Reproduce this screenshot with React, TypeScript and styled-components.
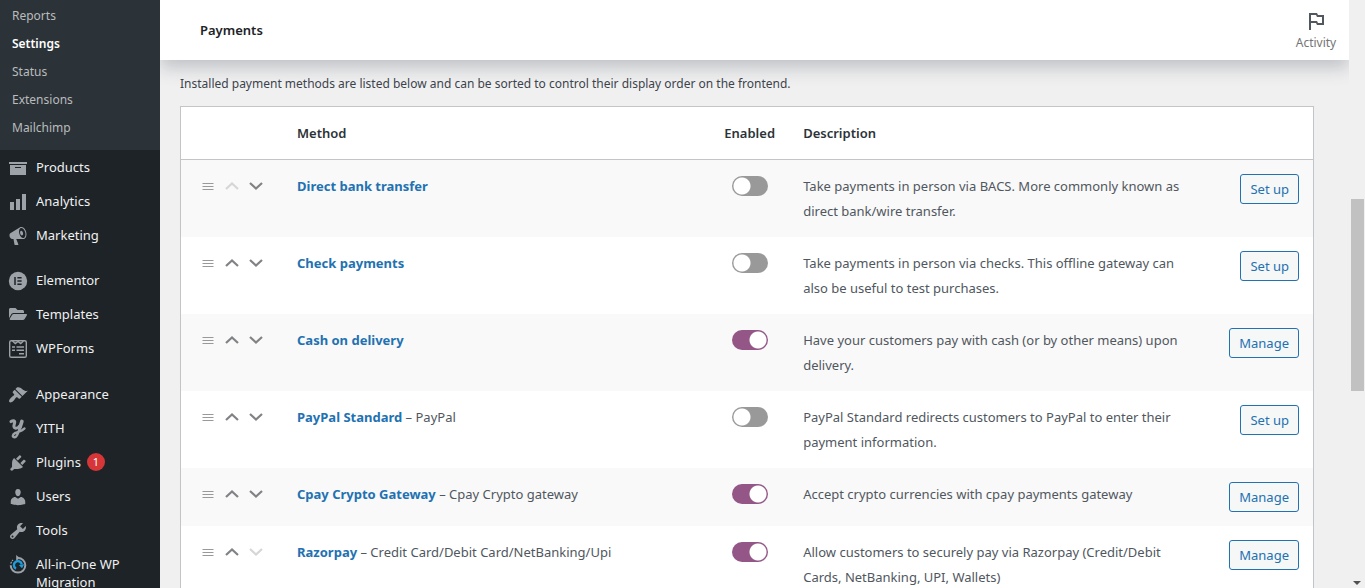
import React from "react";
import styled, { createGlobalStyle, css } from "styled-components";
import { FaFolderOpen } from "react-icons/fa";
import { MdOutlinedFlag } from "react-icons/md";

const GlobalStyle = createGlobalStyle`
  *, *::before, *::after { box-sizing: border-box; }
  body {
    margin: 0;
    background: #f0f0f1;
    color: #3c434a;
    font-family: "Noto Sans", "Open Sans", sans-serif;
    font-size: 12px;
    line-height: 18px;
  }
  a { text-decoration: none; }
`;

const Shell = styled.div`
  display: flex;
  height: 100vh;
  overflow: hidden;
`;

const Sidebar = styled.nav`
  flex: 0 0 160px;
  background: #1d2327;
  overflow: hidden;
`;

const SubMenu = styled.ul`
  list-style: none;
  margin: 0;
  padding: 2px 0 8px;
  background: #2c3338;
`;

const SubLink = styled.a<{ $current?: boolean }>`
  display: block;
  padding: 5px 12px;
  color: ${(p) => (p.$current ? "#fff" : "#b9bbbd")};
  font-weight: ${(p) => (p.$current ? 600 : 400)};
`;

const MenuGroup = styled.ul`
  list-style: none;
  margin: 0;
  padding: 0 0 11px;
  & + & { padding-bottom: 12px; }
`;

const MenuLink = styled.a`
  display: flex;
  align-items: flex-start;
  padding: 8px 12px 8px 8px;
  gap: 8px;
  color: #f0f0f1;
  font-size: 13px;
`;

const MenuIcon = styled.span`
  display: grid;
  place-items: center;
  flex: 0 0 20px;
  height: 18px;
  color: #9ca2a7;
  svg { display: block; overflow: visible; }
`;

const Badge = styled.span`
  display: inline-block;
  min-width: 18px;
  height: 18px;
  margin-left: 6px;
  border-radius: 9px;
  background: #d63638;
  color: #fff;
  font-size: 11px;
  text-align: center;
  vertical-align: top;
`;

const Main = styled.main`
  flex: 1;
  min-width: 0;
  overflow: hidden;
`;

const TopBar = styled.header`
  display: flex;
  align-items: center;
  justify-content: space-between;
  height: 60px;
  padding: 0 0 0 40px;
  background: #fff;
  box-shadow: 0 8px 16px rgba(85, 93, 102, 0.3);
`;

const Title = styled.h1`
  margin: 0;
  color: #1d2327;
  font-size: 13px;
  font-weight: 600;
`;

const ActivityButton = styled.button`
  display: flex;
  flex-direction: column;
  align-items: center;
  width: 66px;
  gap: 1px;
  padding: 0;
  border: 0;
  background: none;
  color: #757575;
  font: inherit;
  svg { color: #50575e; }
`;

const Content = styled.section`
  padding: 15px 35px 0 20px;
`;

const Intro = styled.p`
  margin: 0 0 13px;
`;

const Table = styled.table`
  width: 100%;
  table-layout: fixed;
  border: 1px solid #c3c4c7;
  border-spacing: 0;
  background: #fff;
  font-size: 13px;
  line-height: 25px;
`;

const Col = styled.col<{ $width?: string }>`
  width: ${(p) => p.$width ?? "auto"};
`;

const cell = css<{ $align?: "center" | "right" }>`
  padding: 14px 14px 13px;
  text-align: ${(p) => p.$align ?? "left"};
  vertical-align: top;
`;

const HeadCell = styled.th<{ $align?: "center" | "right" }>`
  ${cell}
  padding-left: ${(p) => (p.$align ? "0" : "14px")};
  padding-right: 0;
  border-bottom: 1px solid #c3c4c7;
  color: #2c3338;
  font-weight: 600;
`;

const Cell = styled.td<{ $align?: "center" | "right" }>`
  ${cell}
  color: #50575e;
`;

const Row = styled.tr`
  &:nth-child(odd) { background: #f9f9f9; }
`;

const SortCell = styled(Cell)`
  padding-left: 15px;
  padding-right: 0;
`;

const SortTools = styled.div`
  display: flex;
  height: 24px;
  align-items: center;
`;

const SortButton = styled.button`
  display: grid;
  place-items: center;
  width: 24px;
  height: 24px;
  padding: 0;
  border: 0;
  background: none;
  color: #808285;
  &:disabled { color: #d5d6d7; }
`;

const MethodLink = styled.a`
  color: #2271b1;
  font-weight: 700;
`;

const Toggle = styled.input`
  appearance: none;
  display: block;
  width: 36px;
  height: 20px;
  margin: 2px auto 0;
  border-radius: 10px;
  background: radial-gradient(circle at 10px 10px, #fff 8px, transparent 9px) #999;
  &:checked {
    background: radial-gradient(circle at 26px 10px, #fff 8px, transparent 9px) #935687;
  }
`;

const ActionCell = styled(Cell)`
  padding-bottom: 14px;
`;

const ActionButton = styled.button`
  display: block;
  height: 30px;
  margin-left: auto;
  padding: 0 9px;
  border: 1px solid #2271b1;
  border-radius: 3px;
  background: #f6f7f7;
  color: #2271b1;
  font: inherit;
  font-size: 13px;
  line-height: 28px;
`;

const ScrollTrack = styled.div`
  display: flex;
  flex-direction: column;
  flex: 0 0 16px;
  align-items: center;
  background: #f0f0f0;
`;

const ScrollThumb = styled.div`
  width: 13px;
  height: 192px;
  margin-top: 199px;
  background: #c1c1c1;
`;

const ScrollArrow = styled.div`
  margin: auto 0 3px;
  border: 4px solid transparent;
  border-top-color: #505050;
  border-bottom: 0;
`;

const Glyph = ({ d, size = 20 }: { d: string; size?: number }) => (
  <svg width={size} height={size} viewBox="0 0 20 20" fill="currentColor" aria-hidden="true">
    <path d={d} />
  </svg>
);

const ElementorIcon = () => (
  <svg width="20" height="20" viewBox="0 0 20 20" aria-hidden="true">
    <circle cx="10" cy="10" r="9.2" fill="currentColor" />
    <path d="M7 6v8M9.4 6.8h4.2M9.4 10h4.2M9.4 13.2h4.2" stroke="#1d2327" strokeWidth="1.5" />
  </svg>
);

const FormsIcon = () => (
  <svg width="20" height="20" viewBox="0 0 20 20" fill="none" stroke="currentColor" aria-hidden="true">
    <rect x="1.7" y="1.7" width="16.6" height="16.6" rx="1.6" strokeWidth="1.4" />
    <path d="M4.5 2l2.8 2.6L10 2.4l2.7 2.2L15.500 2" strokeWidth="1.3" />
    <path d="M4 8h3M8.500 8H16M4 11.200h3M8.500 11.200H16M11 14.800h5" strokeWidth="1.5" />
  </svg>
);

const YithIcon = () => (
  <svg width="20" height="20" viewBox="0 0 20 20" fill="none" stroke="currentColor" strokeLinecap="round" strokeLinejoin="round" aria-hidden="true">
    <path d="M3 2.600C4.500 1.600 7 1.200 6.700 3.400L5.900 6.800C5.500 9.900 9.400 10 11.500 7" strokeWidth="3" />
    <path d="M13.900 2.400L11.600 9.500C10.600 13 9.200 18.300 6.700 18.300C4.300 18.300 4.200 15.700 7 14.200C10 12.600 14 12.300 16.400 9.500" strokeWidth="2.500" />
    <path d="M13.900 2.400L12 8.500" strokeWidth="3.600" />
  </svg>
);

const MigrationIcon = () => (
  <svg width="20" height="20" viewBox="0 0 20 20" fill="none" aria-hidden="true">
    <path d="M10 3A7.300 7.300 0 1 1 2.700 10.300" stroke="currentColor" strokeWidth="2" />
    <path d="M2.800 8.700A7.300 7.300 0 0 1 5 5" stroke="currentColor" strokeWidth="1.200" strokeDasharray="2 1" />
    <path d="M8.200 0L11.800 3L8.200 6Z" fill="currentColor" />
    <path d="M8 13.700A4 4 0 1 1 13.800 9.500" stroke="#1e9ddb" strokeWidth="2.400" />
    <path d="M16.200 9.200L14 13.200L10.800 9.900Z" fill="#1e9ddb" />
  </svg>
);

const paths = {
  archive: "M19 4v2H1V4h18zM2 7h16v10H2V7zm11 3V9H7v1h6z",
  chart: "M18 18V2h-4v16h4zm-6 0V7H8v11h4zm-6 0v-8H2v8h4z",
  megaphone:
    "M18.15 5.94c.46 1.62.38 3.22-.02 4.48-.42 1.28-1.26 2.18-2.3 2.48-.16.06-.26.06-.4.06-.06.02-.12.02-.18.02-.06.02-.14.02-.22.02h-6.8l2.22 5.5c.02.14-.06.26-.14.34-.08.1-.24.16-.34.16H6.95c-.1 0-.26-.06-.34-.16-.08-.08-.16-.2-.14-.34l-1-5.5H4.25l-.02-.02c-.5.06-1.08-.18-1.54-.62s-.88-1.08-1.06-1.88c-.24-.8-.2-1.56-.02-2.2.18-.62.58-1.08 1.06-1.3l.02-.02 9-5.4c.1-.06.18-.1.24-.16.06-.04.14-.08.24-.12.16-.08.28-.12.5-.18 1.04-.3 2.24.1 3.22.98s1.84 2.24 2.26 3.86zm-2.58 5.98h-.02c.4-.1.74-.34 1.04-.7.58-.7.86-1.76.86-3.04 0-.64-.1-1.3-.28-1.98-.34-1.36-1.02-2.5-1.78-3.24s-1.68-1.1-2.46-.88c-.82.22-1.4.96-1.7 2-.32 1.04-.28 2.36.06 3.72.38 1.36 1 2.5 1.8 3.24.78.74 1.62 1.1 2.48.88zm-2.54-7.08c.22-.04.42-.02.62.04.38.16.76.48 1.02 1s.42 1.2.42 1.78c0 .3-.04.56-.12.8-.18.48-.44.84-.86.94-.34.1-.8-.06-1.14-.4s-.64-.86-.78-1.5c-.18-.62-.12-1.24.02-1.72s.48-.84.82-.94z",
  brush:
    "M14.48 11.06L7.41 3.99l1.5-1.5c.5-.56 2.3-.47 3.51.32 1.21.8 1.43 1.28 2.91 2.1 1.18.64 2.45 1.26 4.45.85zm-.71.71L6.7 4.7 4.93 6.47c-.39.39-.39 1.02 0 1.41l1.06 1.06c.39.39.39 1.03 0 1.42-.6.6-1.43 1.11-2.21 1.69-.35.26-.7.53-1.01.84C1.43 14.23.4 16.08 1.4 17.07c.99 1 2.84-.03 4.18-1.36.31-.31.58-.66.85-1.02.57-.78 1.08-1.61 1.69-2.21.39-.39 1.02-.39 1.41 0l1.06 1.06c.39.39 1.02.39 1.41 0z",
  plug:
    "M13.11 4.36L9.87 7.6 8 5.73l3.24-3.24c.35-.34 1.05-.2 1.56.32.52.51.66 1.21.31 1.55zm-8 1.77l.91-1.12 9.01 9.01-1.19.84c-.71.71-2.63 1.16-3.82 1.16H6.14L4.9 17.26c-.59.59-1.54.59-2.12 0-.59-.58-.59-1.53 0-2.12l1.24-1.24v-3.88c0-1.13.4-3.19 1.09-3.89zm7.26 3.97l3.24-3.24c.34-.35 1.04-.21 1.55.31.52.51.66 1.21.31 1.55l-3.24 3.25z",
  user:
    "M10 9.25c-2.27 0-2.73-3.44-2.73-3.44C7 4.02 7.82 2 9.97 2c2.16 0 2.98 2.02 2.71 3.81 0 0-.41 3.44-2.68 3.44zm0 2.57L12.72 10c2.39 0 4.52 2.33 4.52 4.53v2.49s-3.65 1.13-7.24 1.13c-3.65 0-7.24-1.13-7.24-1.13v-2.49c0-2.25 1.94-4.48 4.47-4.48z",
  wrench:
    "M16.68 9.77c-1.34 1.34-3.3 1.67-4.95.99l-5.41 6.52c-.99.99-2.59.99-3.58 0s-.99-2.59 0-3.57l6.52-5.42c-.68-1.65-.35-3.61.99-4.95 1.28-1.28 3.12-1.62 4.72-1.06l-2.89 2.89 2.82 2.82 2.86-2.87c.53 1.58.18 3.39-1.08 4.65zM3.81 16.21c.4.39 1.04.39 1.43 0 .4-.4.4-1.04 0-1.43-.39-.4-1.03-.4-1.43 0-.39.39-.39 1.03 0 1.43z",
};

const subItems = ["Reports", "Settings", "Status", "Extensions", "Mailchimp"];

type MenuItem = { label: string; icon: React.ReactNode; badge?: number };

const menuGroups: MenuItem[][] = [
  [
    { label: "Products", icon: <Glyph d={paths.archive} /> },
    { label: "Analytics", icon: <Glyph d={paths.chart} /> },
    { label: "Marketing", icon: <Glyph d={paths.megaphone} /> },
  ],
  [
    { label: "Elementor", icon: <ElementorIcon /> },
    { label: "Templates", icon: <FaFolderOpen size={18} /> },
    { label: "WPForms", icon: <FormsIcon /> },
  ],
  [
    { label: "Appearance", icon: <Glyph d={paths.brush} /> },
    { label: "YITH", icon: <YithIcon /> },
    { label: "Plugins", icon: <Glyph d={paths.plug} />, badge: 1 },
    { label: "Users", icon: <Glyph d={paths.user} /> },
    { label: "Tools", icon: <Glyph d={paths.wrench} /> },
    { label: "All-in-One WP Migration", icon: <MigrationIcon /> },
  ],
];

type Method = { name: string; detail?: string; enabled: boolean; description: string };

const methods: Method[] = [
  {
    name: "Direct bank transfer",
    enabled: false,
    description: "Take payments in person via BACS. More commonly known as direct bank/wire transfer.",
  },
  {
    name: "Check payments",
    enabled: false,
    description: "Take payments in person via checks. This offline gateway can also be useful to test purchases.",
  },
  {
    name: "Cash on delivery",
    enabled: true,
    description: "Have your customers pay with cash (or by other means) upon delivery.",
  },
  {
    name: "PayPal Standard",
    detail: "PayPal",
    enabled: false,
    description: "PayPal Standard redirects customers to PayPal to enter their payment information.",
  },
  {
    name: "Cpay Crypto Gateway",
    detail: "Cpay Crypto gateway",
    enabled: true,
    description: "Accept crypto currencies with cpay payments gateway",
  },
  {
    name: "Razorpay",
    detail: "Credit Card/Debit Card/NetBanking/Upi",
    enabled: true,
    description: "Allow customers to securely pay via Razorpay (Credit/Debit Cards, NetBanking, UPI, Wallets)",
  },
];

const HandleIcon = () => (
  <svg width="12" height="10" viewBox="0 0 12 10" stroke="#999" aria-hidden="true">
    <path d="M.5 2.500h11M.5 5.500h11M.5 8.500h11" />
  </svg>
);

const Chevron = ({ down }: { down?: boolean }) => (
  <svg width="14" height="10" viewBox="0 0 14 10" fill="none" stroke="currentColor" strokeWidth="2.200" aria-hidden="true">
    <path d={down ? "M1 2L7 7.500L13 2" : "M1 8L7 2.500L13 8"} />
  </svg>
);

export default function App() {
  return (
    <>
      <GlobalStyle />
      <Shell>
        <Sidebar aria-label="Main menu">
          <SubMenu>
            {subItems.map((label) => (
              <li key={label}>
                <SubLink href="#" $current={label === "Settings"}>{label}</SubLink>
              </li>
            ))}
          </SubMenu>
          {menuGroups.map((group) => (
            <MenuGroup key={group[0].label}>
              {group.map((item) => (
                <li key={item.label}>
                  <MenuLink href="#">
                    <MenuIcon>{item.icon}</MenuIcon>
                    <span>
                      {item.label}
                      {item.badge && <Badge>{item.badge}</Badge>}
                    </span>
                  </MenuLink>
                </li>
              ))}
            </MenuGroup>
          ))}
        </Sidebar>
        <Main>
          <TopBar>
            <Title>Payments</Title>
            <ActivityButton type="button">
              <MdOutlinedFlag size={24} />
              Activity
            </ActivityButton>
          </TopBar>
          <Content>
            <Intro>
              Installed payment methods are listed below and can be sorted to control their display order on the frontend.
            </Intro>
            <Table>
              <colgroup>
                <Col $width="102px" />
                <Col />
                <Col $width="79px" />
                <Col $width="37%" />
                <Col $width="105px" />
              </colgroup>
              <thead>
                <tr>
                  <HeadCell />
                  <HeadCell>Method</HeadCell>
                  <HeadCell $align="center">Enabled</HeadCell>
                  <HeadCell>Description</HeadCell>
                  <HeadCell />
                </tr>
              </thead>
              <tbody>
                {methods.map((m, i) => (
                  <Row key={m.name}>
                    <SortCell>
                      <SortTools>
                        <SortButton type="button" aria-label={`Drag ${m.name}`}>
                          <HandleIcon />
                        </SortButton>
                        <SortButton type="button" aria-label={`Move ${m.name} up`} disabled={i === 0}>
                          <Chevron />
                        </SortButton>
                        <SortButton type="button" aria-label={`Move ${m.name} down`} disabled={i === methods.length - 1}>
                          <Chevron down />
                        </SortButton>
                      </SortTools>
                    </SortCell>
                    <Cell>
                      <MethodLink href="#">{m.name}</MethodLink>
                      {m.detail && ` – ${m.detail}`}
                    </Cell>
                    <Cell $align="center">
                      <Toggle type="checkbox" role="switch" aria-label={`Enable ${m.name}`} defaultChecked={m.enabled} />
                    </Cell>
                    <Cell>{m.description}</Cell>
                    <ActionCell>
                      <ActionButton type="button">{m.enabled ? "Manage" : "Set up"}</ActionButton>
                    </ActionCell>
                  </Row>
                ))}
              </tbody>
            </Table>
          </Content>
        </Main>
        <ScrollTrack aria-hidden="true">
          <ScrollThumb />
          <ScrollArrow />
        </ScrollTrack>
      </Shell>
    </>
  );
}
